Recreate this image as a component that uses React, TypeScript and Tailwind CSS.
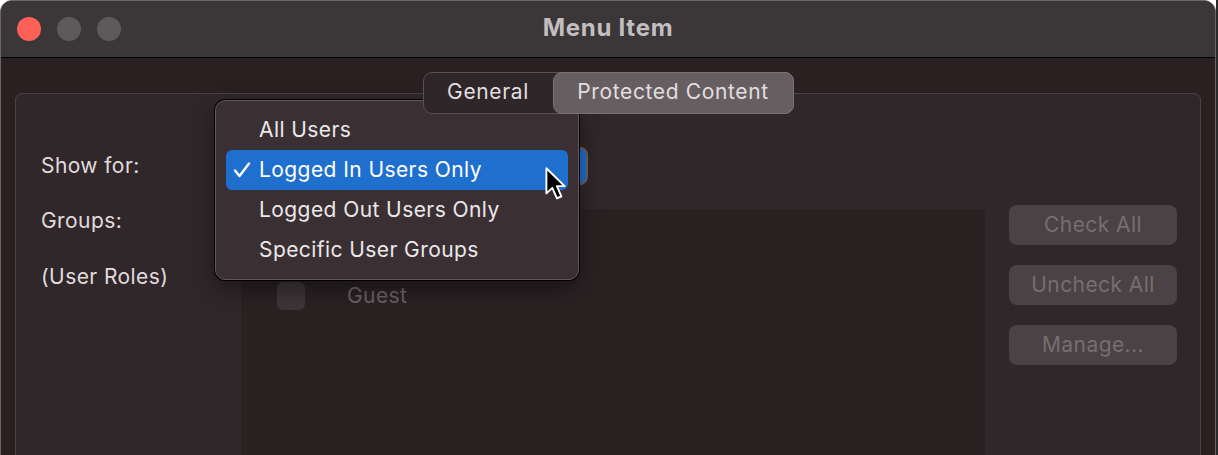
const menuItems = [
  "All Users",
  "Logged In Users Only",
  "Logged Out Users Only",
  "Specific User Groups",
]

const Cursor = () => (
  <svg width="27" height="37" viewBox="0 0 18 25" className="block">
    <path
      d="M1.5 1.5 L1.5 18.5 L5.5 14.8 L8.6 21.8 L11.6 20.6 L8.6 13.6 L13.8 13.6 Z"
      fill="#000"
      stroke="#fff"
      strokeWidth="1.3"
      strokeLinejoin="round"
    />
  </svg>
)

const Tick = () => (
  <svg width="18" height="18" viewBox="0 0 18 18" className="block">
    <path d="M2 9.5 L6.5 15 L16 2.5" fill="none" stroke="#fff" strokeWidth="2.4" strokeLinecap="round" strokeLinejoin="round" />
  </svg>
)

const SideButton = ({ label }: { label: string }) => (
  <div className="flex h-[40px] w-[168px] items-center justify-center rounded-[8px] bg-[#4a4244] text-[21px] tracking-[0.02em] text-[#766e70]">
    {label}
  </div>
)

const App = () => {
  return (
    <div className="h-[455px] w-[1218px] overflow-hidden bg-white font-['Inter','Noto_Sans',sans-serif]">
      <div className="flex">
        {/* WINDOW */}
        <div className="h-[470px] w-[1216px] overflow-hidden rounded-t-[12px] border border-[#6a6567] bg-[#2a2022]">
          {/* TITLE BAR */}
          <div className="grid h-[57px] grid-cols-[1fr_auto_1fr] items-center border-b border-black bg-[#3b3638]">
            <div className="flex items-center gap-[16px] pl-[16px]">
              <div className="h-[24px] w-[24px] rounded-full bg-[#fe5f57]" />
              <div className="h-[24px] w-[24px] rounded-full bg-[#5e5a5c]" />
              <div className="h-[24px] w-[24px] rounded-full bg-[#5e5a5c]" />
            </div>
            <div className="pb-[2px] text-[24px] font-bold tracking-[0.03em] text-[#c2bec0]">Menu Item</div>
            <div />
          </div>

          <div className="px-[14px] pt-[14px]">
            {/* TABS */}
            <div className="relative z-10 flex justify-center">
              <div className="flex h-[42px] items-stretch rounded-[9px] border border-[#575153] bg-[#2e2628] text-[21px] tracking-[0.03em] text-[#e2dee0]">
                <div className="flex w-[129px] items-center justify-center pb-[3px]">General</div>
                <div className="-my-px -mr-px flex w-[241px] items-center justify-center rounded-[9px] border border-[#7a7174] bg-[#675e61] pb-[3px]">
                  Protected Content
                </div>
              </div>
            </div>

            {/* GROUP BOX */}
            <div className="relative -mt-[21px] h-[400px] rounded-[7px] border border-[#4a4345] bg-[#30272a]">
              {/* SHOW FOR */}
              <div className="flex items-center pt-[53px]">
                <div className="w-[225px] pl-[25px] text-[21px] leading-[24px] tracking-[0.02em] text-[#e0dcde]">Show for:</div>
                <div className="h-[38px] w-[347px] rounded-[8px] border-2 border-[#6b6466] bg-[#1f6fce]" />
              </div>

              <div className="mt-[24px] flex">
                <div className="flex w-[225px] flex-col gap-[32px] pl-[25px] text-[21px] leading-[24px] tracking-[0.02em] text-[#e0dcde]">
                  <div>Groups:</div>
                  <div>(User Roles)</div>
                </div>

                {/* LIST */}
                <div className="h-[260px] w-[744px] bg-[#2a2123] pl-[36px] pt-[71px]">
                  <div className="flex items-center gap-[42px]">
                    <div className="h-[28px] w-[28px] rounded-[6px] bg-[#3d3538]" />
                    <div className="text-[21px] tracking-[0.02em] text-[#6b6365]">Guest</div>
                  </div>
                </div>

                <div className="-mt-[4px] flex flex-col gap-[20px] pl-[24px]">
                  <SideButton label="Check All" />
                  <SideButton label="Uncheck All" />
                  <SideButton label="Manage..." />
                </div>
              </div>

              {/* POPUP MENU */}
              <div className="absolute left-[199px] top-[6px] w-[364px] rounded-[10px] border border-[#5e585a] bg-[#3a3034] px-[10px] py-[9px] shadow-[0_0_0_1px_#000,0_8px_24px_rgba(0,0,0,0.45)]">
                {menuItems.map((item, i) => (
                  <div
                    key={item}
                    className={`relative flex h-[40px] items-center rounded-[6px] pb-[1px] pl-[33px] text-[21px] tracking-[0.02em] text-[#ece8ea] ${
                      i === 1 ? "bg-[#1f6fce] text-white" : ""
                    }`}
                  >
                    {i === 1 && (
                      <div className="absolute left-[7px] top-[11px]">
                        <Tick />
                      </div>
                    )}
                    {item}
                    {i === 1 && (
                      <div className="absolute left-[318px] top-[16px]">
                        <Cursor />
                      </div>
                    )}
                  </div>
                ))}
              </div>
            </div>
          </div>
        </div>
        <div className="h-[455px] w-[2px] bg-[#2a2a2a]" />
      </div>
    </div>
  )
}

export default App
